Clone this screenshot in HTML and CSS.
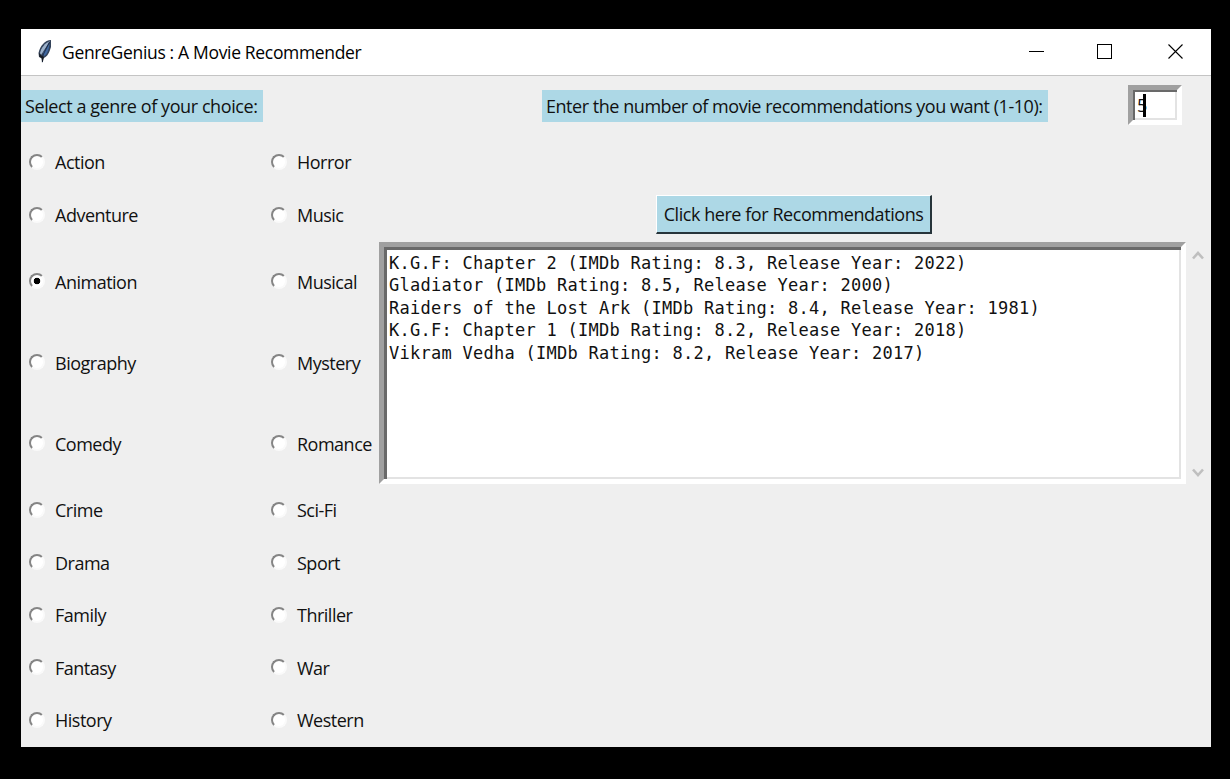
FILE: index.html
```html
<!DOCTYPE html>
<html lang="en">
<head>
<meta charset="utf-8">
<title>GenreGenius : A Movie Recommender</title>
<link rel="stylesheet" href="styles.css">
</head>
<body>
<main class="window">
  <header class="titlebar">
    <svg class="feather" width="16" height="25" viewBox="0 0 16 25">
      <path d="M14 1C8 1 3 7 1.500 14l.500 4 2.500 1 .500 5 1.500-5c4-1 6-6 7.500-11z" fill="#34435a"/>
      <path d="M13 2C8 4 4 9 3 14l1 2z" fill="#9db2cb"/>
      <path d="M12.500 4.500C12 11 10 16 7 17l-1-3z" fill="#4068a0"/>
      <path d="M12.500 3 5.500 17v6" fill="none" stroke="#1b2d4c" stroke-width="1"/>
      <path d="M2 14 5 17l2 1-1.300 5.500L4.500 19l-2-1z" fill="#171b21"/>
    </svg>
    <h1 class="title">GenreGenius : A Movie Recommender</h1>
    <svg class="controls" width="160" height="17" viewBox="0 0 160 17" fill="none" stroke="#000" stroke-width="1">
      <path d="M1.500 8.500h15M70.500 1.500h14v14h-14z" shape-rendering="crispEdges"/>
      <path d="M141.500 1.500l14 14M155.500 1.500l-14 14" stroke-width="1.100"/>
    </svg>
  </header>
  <div class="content">
    <section class="genres">
      <div class="head"><span class="label label-genre">Select a genre of your choice:</span></div>
      <div class="radio"><i class="dot"></i><span>Action</span></div>
      <div class="radio"><i class="dot"></i><span>Horror</span></div>
      <div class="radio"><i class="dot"></i><span>Adventure</span></div>
      <div class="radio"><i class="dot"></i><span>Music</span></div>
      <div class="radio"><i class="dot on"></i><span>Animation</span></div>
      <div class="radio"><i class="dot"></i><span>Musical</span></div>
      <div class="radio"><i class="dot"></i><span>Biography</span></div>
      <div class="radio"><i class="dot"></i><span>Mystery</span></div>
      <div class="radio"><i class="dot"></i><span>Comedy</span></div>
      <div class="radio"><i class="dot"></i><span>Romance</span></div>
      <div class="radio"><i class="dot"></i><span>Crime</span></div>
      <div class="radio"><i class="dot"></i><span>Sci-Fi</span></div>
      <div class="radio"><i class="dot"></i><span>Drama</span></div>
      <div class="radio"><i class="dot"></i><span>Sport</span></div>
      <div class="radio"><i class="dot"></i><span>Family</span></div>
      <div class="radio"><i class="dot"></i><span>Thriller</span></div>
      <div class="radio"><i class="dot"></i><span>Fantasy</span></div>
      <div class="radio"><i class="dot"></i><span>War</span></div>
      <div class="radio"><i class="dot"></i><span>History</span></div>
      <div class="radio"><i class="dot"></i><span>Western</span></div>
    </section>
    <section class="panel">
      <div class="prompt">
        <span class="label label-count">Enter the number of movie recommendations you want (1-10):</span>
        <div class="entry"><span class="value">5</span><i class="caret"></i></div>
      </div>
      <div class="action"><button class="button">Click here for Recommendations</button></div>
      <div class="output">
        <pre class="results">K.G.F: Chapter 2 (IMDb Rating: 8.3, Release Year: 2022)
Gladiator (IMDb Rating: 8.5, Release Year: 2000)
Raiders of the Lost Ark (IMDb Rating: 8.4, Release Year: 1981)
K.G.F: Chapter 1 (IMDb Rating: 8.2, Release Year: 2018)
Vikram Vedha (IMDb Rating: 8.2, Release Year: 2017)</pre>
        <div class="scrollbar">
          <svg width="12" height="9" viewBox="0 0 12 9"><path d="M1 7.500 6 2l5 5.500" fill="none" stroke="#bfbfbf" stroke-width="2.600"/></svg>
          <svg width="12" height="9" viewBox="0 0 12 9"><path d="M1 1.500 6 7l5-5.500" fill="none" stroke="#bfbfbf" stroke-width="2.600"/></svg>
        </div>
      </div>
    </section>
  </div>
</main>
</body>
</html>
```
FILE: styles.css
```css
* { box-sizing: border-box; }
body {
  margin: 0;
  padding: 29px 19px 32px 21px;
  height: 779px;
  background: #000;
  color: #111;
  font: 18px/24px "Open Sans", "Noto Sans", sans-serif;
  overflow: hidden;
}
.window { height: 718px; background: #efefef; }
.titlebar {
  height: 47px;
  display: flex;
  align-items: center;
  padding: 0 24px 2px 16px;
  background: #fff;
  border-bottom: 1px solid #c4c4c4;
}
.title {
  margin: 2px auto 0 9px;
  font-size: 17.500px;
  font-weight: 400;
  letter-spacing: -0.330px;
  color: #000;
}
.content { display: flex; }
.genres {
  width: 358px;
  display: grid;
  grid-template-columns: 242px 116px;
  grid-template-rows: 60px 52.500px 53px 80.500px 81px 81px 52.500px 52.500px 52.500px 52.500px 52.500px;
  align-items: center;
}
.head { grid-column: 1 / 3; }
.label {
  display: block;
  height: 32px;
  padding: 4px;
  background: #add8e6;
  white-space: nowrap;
}
.label-genre { width: 242px; letter-spacing: -0.42px; }
.label-count { width: 506px; letter-spacing: -0.46px; }
.radio {
  display: flex;
  align-items: center;
  gap: 10px;
  padding-left: 8px;
  letter-spacing: -0.5px;
  white-space: nowrap;
}
.dot {
  width: 16px;
  height: 16px;
  margin-top: -1px;
  border: 2px solid;
  border-color: #858585 #fafafa #fafafa #858585;
  border-radius: 50%;
  background: #fff;
}
.dot.on { background: radial-gradient(circle, #000 0 3px, #fff 3.600px); }
.panel { flex: 1; }
.prompt {
  height: 60px;
  display: flex;
  align-items: center;
  justify-content: space-between;
  padding: 0 29px 0 163px;
}
.entry {
  width: 54px;
  height: 40px;
  margin-top: -2px;
  display: flex;
  align-items: center;
  padding-left: 4px;
  border: 5px solid;
  border-color: #a0a0a0 #fff #fff #a0a0a0;
  background: #fff;
  box-shadow: inset 2px 2px #696969, inset -2px -2px #e3e3e3;
}
.value { margin-right: -4px; }
.caret { width: 3px; height: 23px; background: #000; }
.action { height: 106px; padding: 59px 0 0 277px; }
.button {
  display: block;
  width: 276px;
  height: 39px;
  padding: 0;
  border: solid;
  border-width: 1px 2px 2px 1px;
  border-color: #fff #26343a #26343a #fff;
  background: #add8e6;
  color: #111;
  font: inherit;
  letter-spacing: -0.44px;
  white-space: nowrap;
}
.output { display: flex; }
.results {
  width: 807px;
  height: 242px;
  margin: 0;
  padding: 4.500px 5px;
  border: 5px solid;
  border-color: #a0a0a0 #fff #fff #a0a0a0;
  background: #fff;
  box-shadow: inset 3px 3px #696969, inset -2px -2px #e3e3e3;
  font: 17px/22.500px "DejaVu Sans Mono", monospace;
  letter-spacing: 0.265px;
}
.scrollbar {
  width: 24px;
  display: flex;
  flex-direction: column;
  align-items: center;
  justify-content: space-between;
  padding: 9px 0 7px;
}
```
